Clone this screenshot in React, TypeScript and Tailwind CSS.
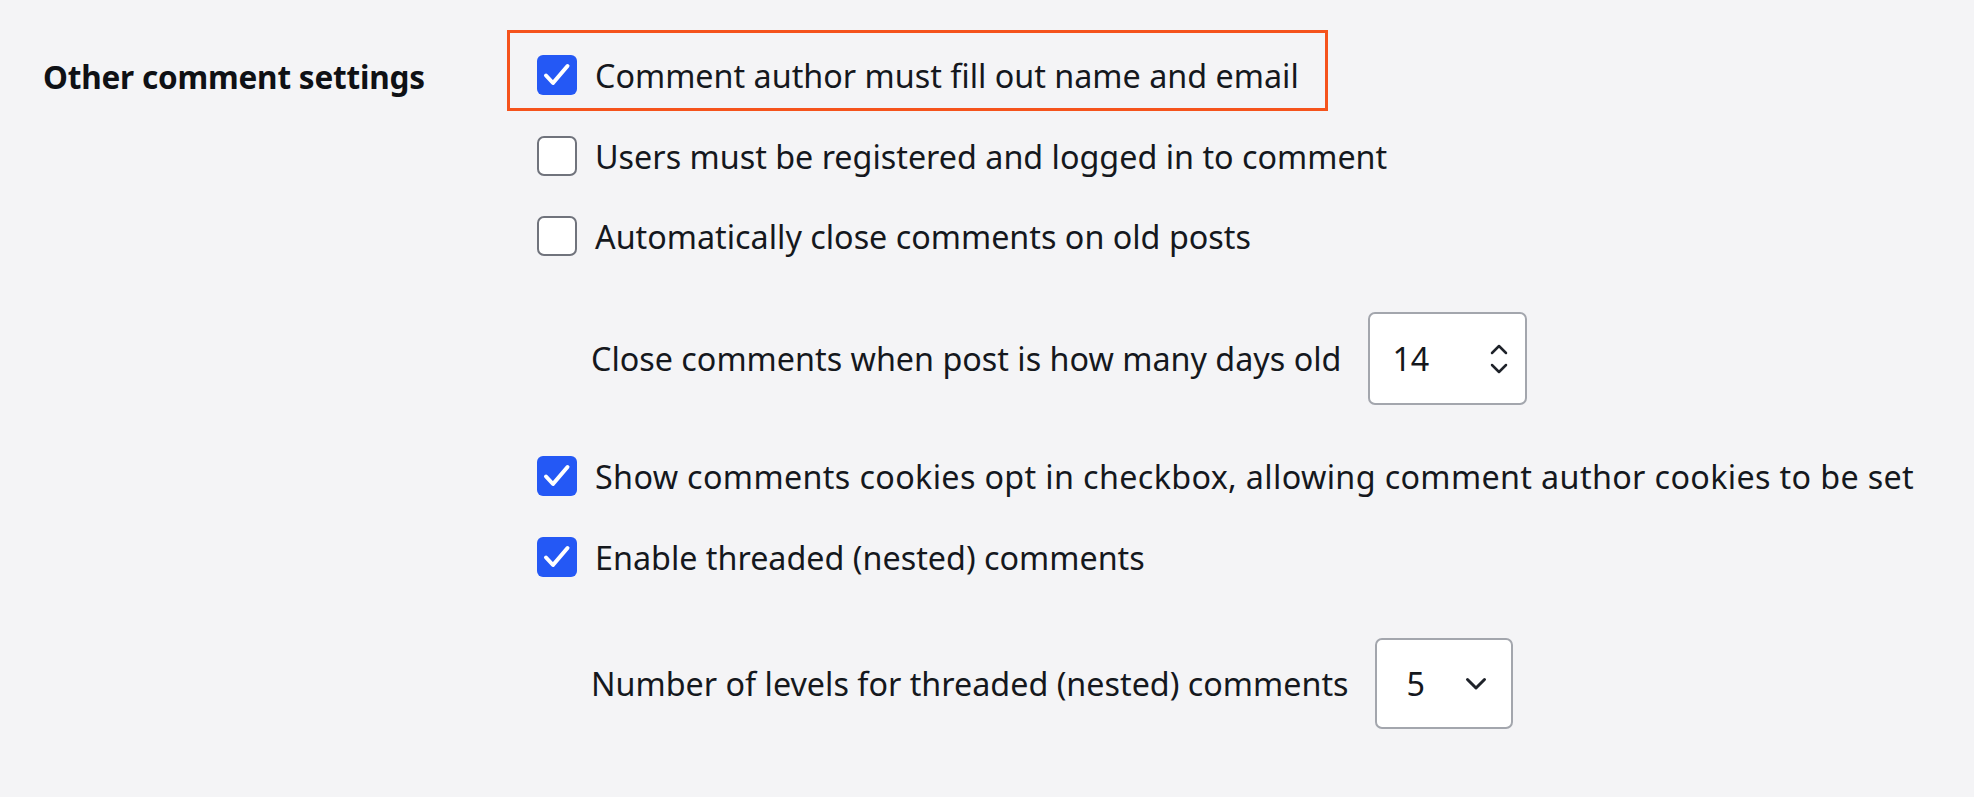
import React from "react";

const Check = () => (
  <svg viewBox="0 0 40 40" className="h-10 w-10">
    <rect x="0" y="0" width="40" height="40" rx="6" fill="#2458f5" />
    <path d="M9 20.5l7 7.5L30.5 11" fill="none" stroke="#fff" strokeWidth={4} strokeLinecap="round" strokeLinejoin="round" />
  </svg>
);

const Empty = () => (
  <div className="h-10 w-10 shrink-0 rounded-[7px] border-2 border-[#70737c] bg-white" />
);

interface RowProps {
  checked: boolean;
  label: string;
  className?: string;
}

const CheckRow = ({ checked, label, className = "" }: RowProps) => (
  <div className={`flex items-center ${className}`}>
    <div className="h-10 w-10 shrink-0">{checked ? <Check /> : <Empty />}</div>
    <span className="ml-[18px] whitespace-nowrap">{label}</span>
  </div>
);

export default function App() {
  return (
    <div className="min-h-[797px] w-full bg-[#f4f4f6] font-['Noto_Sans',sans-serif] text-[32.3px] leading-none text-[#15181d]">
      <div className="flex pl-[43px] pt-[30px]">
        <div className="w-[494px] shrink-0 pt-[31px] text-[31.5px] font-bold tracking-[-0.2px] text-[#0f1115]">
          Other comment settings
        </div>
        <div className="flex flex-col">
          <div className="-ml-[30px] w-[821px] border-[3px] border-[#f5531c] pl-[27px] pt-[22px] pb-[13px]">
            <CheckRow checked label="Comment author must fill out name and email" />
          </div>
          <CheckRow className="mt-[25px]" checked={false} label="Users must be registered and logged in to comment" />
          <CheckRow className="mt-[40px]" checked={false} label="Automatically close comments on old posts" />

          <div className="mt-[56px] flex items-center pl-[54px]">
            <span className="whitespace-nowrap">Close comments when post is how many days old</span>
            <div className="ml-[27px] flex h-[93px] w-[159px] items-center justify-between rounded-[7px] border-2 border-[#a3a6ad] bg-white pl-[22px] pr-[16px]">
              <span>14</span>
              <svg viewBox="0 0 20 32" className="h-[32px] w-[20px]">
                <path d="M3 10l7-7 7 7M3 22l7 7 7-7" fill="none" stroke="#1f232a" strokeWidth={2.5} strokeLinecap="round" strokeLinejoin="round" />
              </svg>
            </div>
          </div>

          <CheckRow className="mt-[51px] tracking-[0.35px]" checked label="Show comments cookies opt in checkbox, allowing comment author cookies to be set" />
          <CheckRow className="mt-[41px]" checked label="Enable threaded (nested) comments" />

          <div className="mt-[61px] flex items-center pl-[54px]">
            <span className="whitespace-nowrap">Number of levels for threaded (nested) comments</span>
            <div className="ml-[26px] flex h-[91px] w-[138px] items-center justify-between rounded-[7px] border-2 border-[#a3a6ad] bg-white pl-[30px] pr-[24px]">
              <span>5</span>
              <svg viewBox="0 0 22 14" className="h-[14px] w-[22px]">
                <path d="M2.5 2.5l8.5 8.5 8.5-8.5" fill="none" stroke="#1f232a" strokeWidth={3} strokeLinecap="round" strokeLinejoin="round" />
              </svg>
            </div>
          </div>
        </div>
      </div>
    </div>
  );
}
